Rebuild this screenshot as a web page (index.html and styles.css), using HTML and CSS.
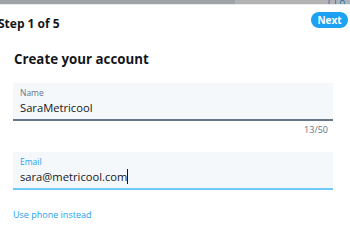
FILE: index.html
```html
<!DOCTYPE html>
<html>
<head>
<meta charset="utf-8">
<link rel="stylesheet" href="styles.css">
</head>
<body>
<div class="topbar">
  <div class="tb-left"></div>
  <div class="tb-right"><span class="tb-paren">(</span><span class="tb-text">Lo</span></div>
</div>
<div class="header">
  <div class="step">Step 1 of 5</div>
  <button class="next">Next</button>
</div>
<main class="content">
  <h1 class="title">Create your account</h1>
  <div class="field">
    <div class="label">Name</div>
    <div class="value">SaraMetricool</div>
  </div>
  <div class="counter">13/50</div>
  <div class="field focused">
    <div class="label">Email</div>
    <div class="value">sara@metricool.com<span class="caret"></span></div>
  </div>
  <a class="alt-link">Use phone instead</a>
</main>
</body>
</html>
```
FILE: styles.css
```css
html, body {
  margin: 0;
  padding: 0;
  background: #ffffff;
  font-family: "Open Sans", "Noto Sans", sans-serif;
  color: #14171a;
  overflow: hidden;
}
.topbar {
  display: flex;
  height: 4px;
  border-bottom: 1px solid #e6ecf0;
}
.tb-left {
  width: 235px;
  background: #9ea3a8;
}
.tb-right {
  flex: 1;
  background: #b3b3b3;
  display: flex;
  align-items: flex-end;
  overflow: hidden;
  font-size: 10px;
  line-height: 4px;
  padding-left: 93px;
  color: #1b6fb8;
}
.tb-paren { margin-right: 3px; }
.header {
  display: flex;
  justify-content: space-between;
  align-items: center;
  margin: 7px 2px 0 -2px;
  height: 17px;
}
.step {
  font-weight: 700;
  font-size: 12px;
  line-height: 17px;
  color: #14171a;
  padding-top: 5px;
}
.next {
  border: 0;
  background: #1da1f2;
  color: #ffffff;
  font-family: inherit;
  font-weight: 700;
  font-size: 10px;
  height: 16px;
  width: 37px;
  border-radius: 8px;
  padding: 0;
  line-height: 16px;
  margin-top: -2px;
}
.content {
  padding: 0 17px 0 13px;
}
.title {
  margin: 20px 0 0 1px;
  font-size: 13.3px;
  line-height: 20px;
  font-weight: 700;
}
.field {
  margin-top: 14px;
  background: #f5f8fa;
  border-bottom: 2px solid #657786;
  padding: 4px 7px 3px;
  height: 29px;
}
.field.focused {
  border-bottom-color: #71c9f8;
  margin-top: 16px;
}
.label {
  font-size: 8.5px;
  line-height: 12px;
  color: #657786;
}
.focused .label { color: #1da1f2; }
.value {
  font-size: 11.2px;
  line-height: 17px;
  color: #14171a;
}
.caret {
  display: inline-block;
  width: 1px;
  height: 15px;
  background: #14171a;
  vertical-align: -3px;
}
.counter {
  text-align: right;
  font-size: 9px;
  line-height: 12px;
  color: #657786;
  margin-top: 3px;
  padding-right: 5px;
}
.alt-link {
  display: block;
  margin-top: 19px;
  font-size: 9px;
  line-height: 12px;
  color: #1da1f2;
}
```
